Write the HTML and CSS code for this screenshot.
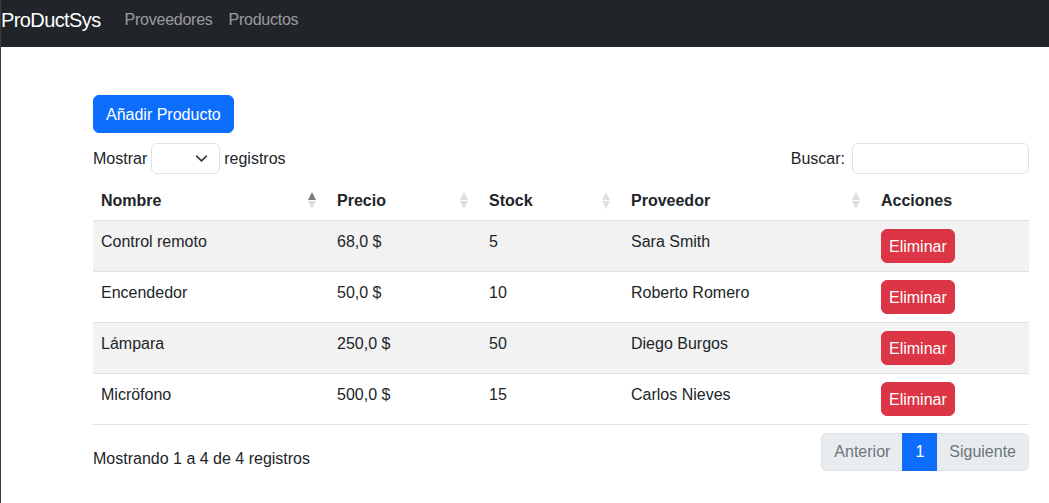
FILE: index.html
```html
<!DOCTYPE html>
<html lang="es">
<head>
<meta charset="utf-8">
<title>ProDuctSys</title>
<link rel="stylesheet" href="styles.css">
</head>
<body>
<nav class="navbar">
  <a class="brand" href="#">ProDuctSys</a>
  <a class="nav-link" href="#">Proveedores</a>
  <a class="nav-link" href="#">Productos</a>
</nav>
<main class="content">
  <button class="btn btn-primary">Añadir Producto</button>
  <div class="dt-top">
    <label class="length">Mostrar <span class="select"><svg width="16" height="16" viewBox="0 0 16 16"><path d="M2 5l6 6 6-6" fill="none" stroke="#343a40" stroke-width="2" stroke-linecap="round" stroke-linejoin="round"/></svg></span> registros</label>
    <label class="search">Buscar: <span class="input"></span></label>
  </div>
  <table class="table">
    <colgroup>
      <col style="width:236px"><col style="width:152px"><col style="width:142px"><col style="width:250px"><col>
    </colgroup>
    <thead>
      <tr>
        <th class="sort asc">Nombre</th>
        <th class="sort">Precio</th>
        <th class="sort">Stock</th>
        <th class="sort">Proveedor</th>
        <th>Acciones</th>
      </tr>
    </thead>
    <tbody>
      <tr class="odd"><td>Control remoto</td><td>68,0 $</td><td>5</td><td>Sara Smith</td><td><button class="btn btn-danger">Eliminar</button></td></tr>
      <tr><td>Encendedor</td><td>50,0 $</td><td>10</td><td>Roberto Romero</td><td><button class="btn btn-danger">Eliminar</button></td></tr>
      <tr class="odd"><td>Lámpara</td><td>250,0 $</td><td>50</td><td>Diego Burgos</td><td><button class="btn btn-danger">Eliminar</button></td></tr>
      <tr><td>Micröfono</td><td>500,0 $</td><td>15</td><td>Carlos Nieves</td><td><button class="btn btn-danger">Eliminar</button></td></tr>
    </tbody>
  </table>
  <div class="dt-bottom">
    <div class="info">Mostrando 1 a 4 de 4 registros</div>
    <ul class="pagination">
      <li class="page disabled first">Anterior</li>
      <li class="page active">1</li>
      <li class="page disabled last">Siguiente</li>
    </ul>
  </div>
</main>
</body>
</html>
```
FILE: styles.css
```css
* { box-sizing: border-box; }
html, body { margin: 0; padding: 0; }
body {
  font-family: "Liberation Sans", Arial, sans-serif;
  font-size: 16px;
  line-height: 1.5;
  color: #212529;
  background: #fff;
  border-left: 1px solid #3c3c3c;
  min-height: 503px;
}
.navbar {
  height: 47px;
  background: #212529;
  display: flex;
  align-items: flex-start;
  padding-top: 5px;
  margin-left: -1px;
}
.brand {
  font-size: 20px;
  line-height: 30px;
  color: #fff;
  text-decoration: none;
  padding-left: 1px;
  margin-right: 16px;
  letter-spacing: -0.6px;
}
.nav-link {
  color: rgba(255,255,255,.55);
  text-decoration: none;
  padding: 3px 8px 0;
  line-height: 24px;
  letter-spacing: -0.25px;
}
.content {
  padding: 48px 20px 0 92px;
}
.btn {
  font-family: inherit;
  font-size: 16px;
  line-height: 24px;
  border: 1px solid transparent;
  border-radius: 6px;
  color: #fff;
  cursor: pointer;
}
.btn-primary {
  background: #0d6efd;
  border-color: #0d6efd;
  padding: 7px 12px 5px;
}
.btn-danger {
  background: #dc3545;
  border-color: #dc3545;
  padding: 5px 7px 3px;
}
.dt-top {
  display: flex;
  justify-content: space-between;
  align-items: center;
  margin-top: 10px;
  height: 31px;
  padding-top: 1px;
}
.length, .search {
  display: flex;
  align-items: center;
  gap: 4px;
}
.select {
  width: 69px;
  height: 31px;
  border: 1px solid #dee2e6;
  border-radius: 6px;
  display: flex;
  align-items: center;
  justify-content: flex-end;
  padding-right: 11px;
  margin-top: -1px;
}
.select svg { width: 13px; height: 13px; }
.input {
  width: 177px;
  height: 31px;
  border: 1px solid #dee2e6;
  border-radius: 6px;
  margin-left: 3px;
  margin-top: -1px;
}
.table {
  width: 936px;
  border-collapse: collapse;
  margin-top: 6px;
  table-layout: fixed;
}
.table th {
  text-align: left;
  font-weight: bold;
  padding: 9px 8px 7px 8px;
  height: 40px;
  border-bottom: 1px solid #dee2e6;
  position: relative;
}
.table td {
  padding: 9px 8px 7px;
  height: 51px;
  vertical-align: top;
  border-bottom: 1px solid #dee2e6;
}
.table td:last-child { padding-top: 8px; }
.table tr.odd td { background: #f2f2f2; }
.sort::before, .sort::after {
  content: "";
  position: absolute;
  right: 13px;
  width: 0;
  height: 0;
  border-left: 4px solid transparent;
  border-right: 4px solid transparent;
  opacity: .15;
}
.sort::before { top: 12px; border-bottom: 8px solid #212529; }
.sort::after { top: 21px; border-top: 8px solid #212529; }
.sort.asc::before { opacity: .6; }
.dt-bottom {
  display: flex;
  justify-content: space-between;
  align-items: flex-start;
  padding-top: 8px;
}
.info { padding-top: 14px; }
.pagination {
  list-style: none;
  margin: 0;
  padding: 0;
  display: flex;
}
.page {
  padding: 6px 12px;
  line-height: 24px;
  border: 1px solid #dee2e6;
  background: #e9ecef;
  color: #6c757d;
}
.page + .page { margin-left: -1px; }
.page.first { border-radius: 6px 0 0 6px; }
.page.last { border-radius: 0 6px 6px 0; }
.page.active {
  background: #0d6efd;
  border-color: #0d6efd;
  color: #fff;
  position: relative;
}
```
